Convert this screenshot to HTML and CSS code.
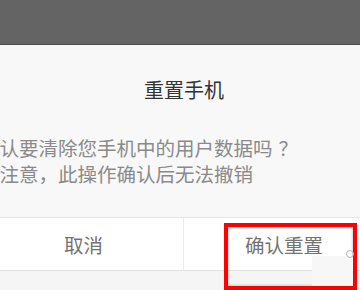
FILE: index.html
```html
<!DOCTYPE html>
<html lang="zh-CN">
<head>
    <meta charset="UTF-8">
    <meta name="viewport" content="width=device-width, initial-scale=1.0">
    <title>重置手机</title>
    <link rel="stylesheet" href="styles.css">
</head>
<body>
    <div class="screen">
        <div class="topbar"></div>

        <div class="dialog">
            <h1 class="title">重置手机</h1>
            <p class="message">确认要清除您手机中的用户数据吗<span class="punct q">？</span><br>请注意<span class="punct">，</span>此操作确认后无法撤销</p>
            <div class="actions">
                <button class="btn btn-cancel">取消</button>
                <button class="btn btn-ok">确认重置</button>
            </div>
            <div class="footer"></div>
        </div>

        <!-- annotation drawn over the screenshot -->
        <div class="mark"></div>
        <div class="patch"></div>
        <div class="dot"></div>
    </div>
</body>
</html>
```

FILE: styles.css
```css
body { margin: 0; font-family: "Noto Sans CJK SC", "Noto Sans", sans-serif; background: #f6f6f6; }
.screen { position: relative; width: 360px; height: 290px; overflow: hidden; background: #f6f6f6; }
.topbar { height: 44px; background: #646464; border-bottom: 1px solid #4e4e4e; }
.dialog { width: 408px; margin-left: -20px; background: #f8f8f8; }
.title { margin: 0; padding-top: 31px; font-size: 20px; line-height: 28px; font-weight: normal; color: #333; text-align: center; }
.message { margin: 31px 0 0 0; font-size: 19.5px; line-height: 25.5px; color: #8a8a8a; }
.punct { font-family: "Noto Sans CJK TC", sans-serif; }
.q { margin-left: 6px; }
.actions { display: grid; grid-template-columns: 1fr 1fr; margin-top: 31px; height: 52px; background: #fff; border-top: 1px solid #e6e6e6; border-bottom: 1px solid #e2e2e2; }
.btn { font-family: inherit; font-size: 19.5px; color: #737373; background: none; border: none; padding: 0; margin: 0; }
.btn-cancel { padding-left: 4px; border-right: 1px solid #ececec; }
.btn-ok { padding-right: 4px; }
.footer { height: 20px; background: #f5f5f5; }
.mark { position: absolute; left: 224px; top: 223px; width: 125px; height: 59px; border: 4px solid #ff0000; box-shadow: inset 0 0 3px rgba(0,0,0,0.35); }
.patch { position: absolute; left: 312px; top: 256px; width: 41px; height: 30px; background: #f7f7f7; }
.dot { position: absolute; left: 346px; top: 250px; width: 6px; height: 6px; border: 1px solid #b5b5b5; border-radius: 50%; }
```
